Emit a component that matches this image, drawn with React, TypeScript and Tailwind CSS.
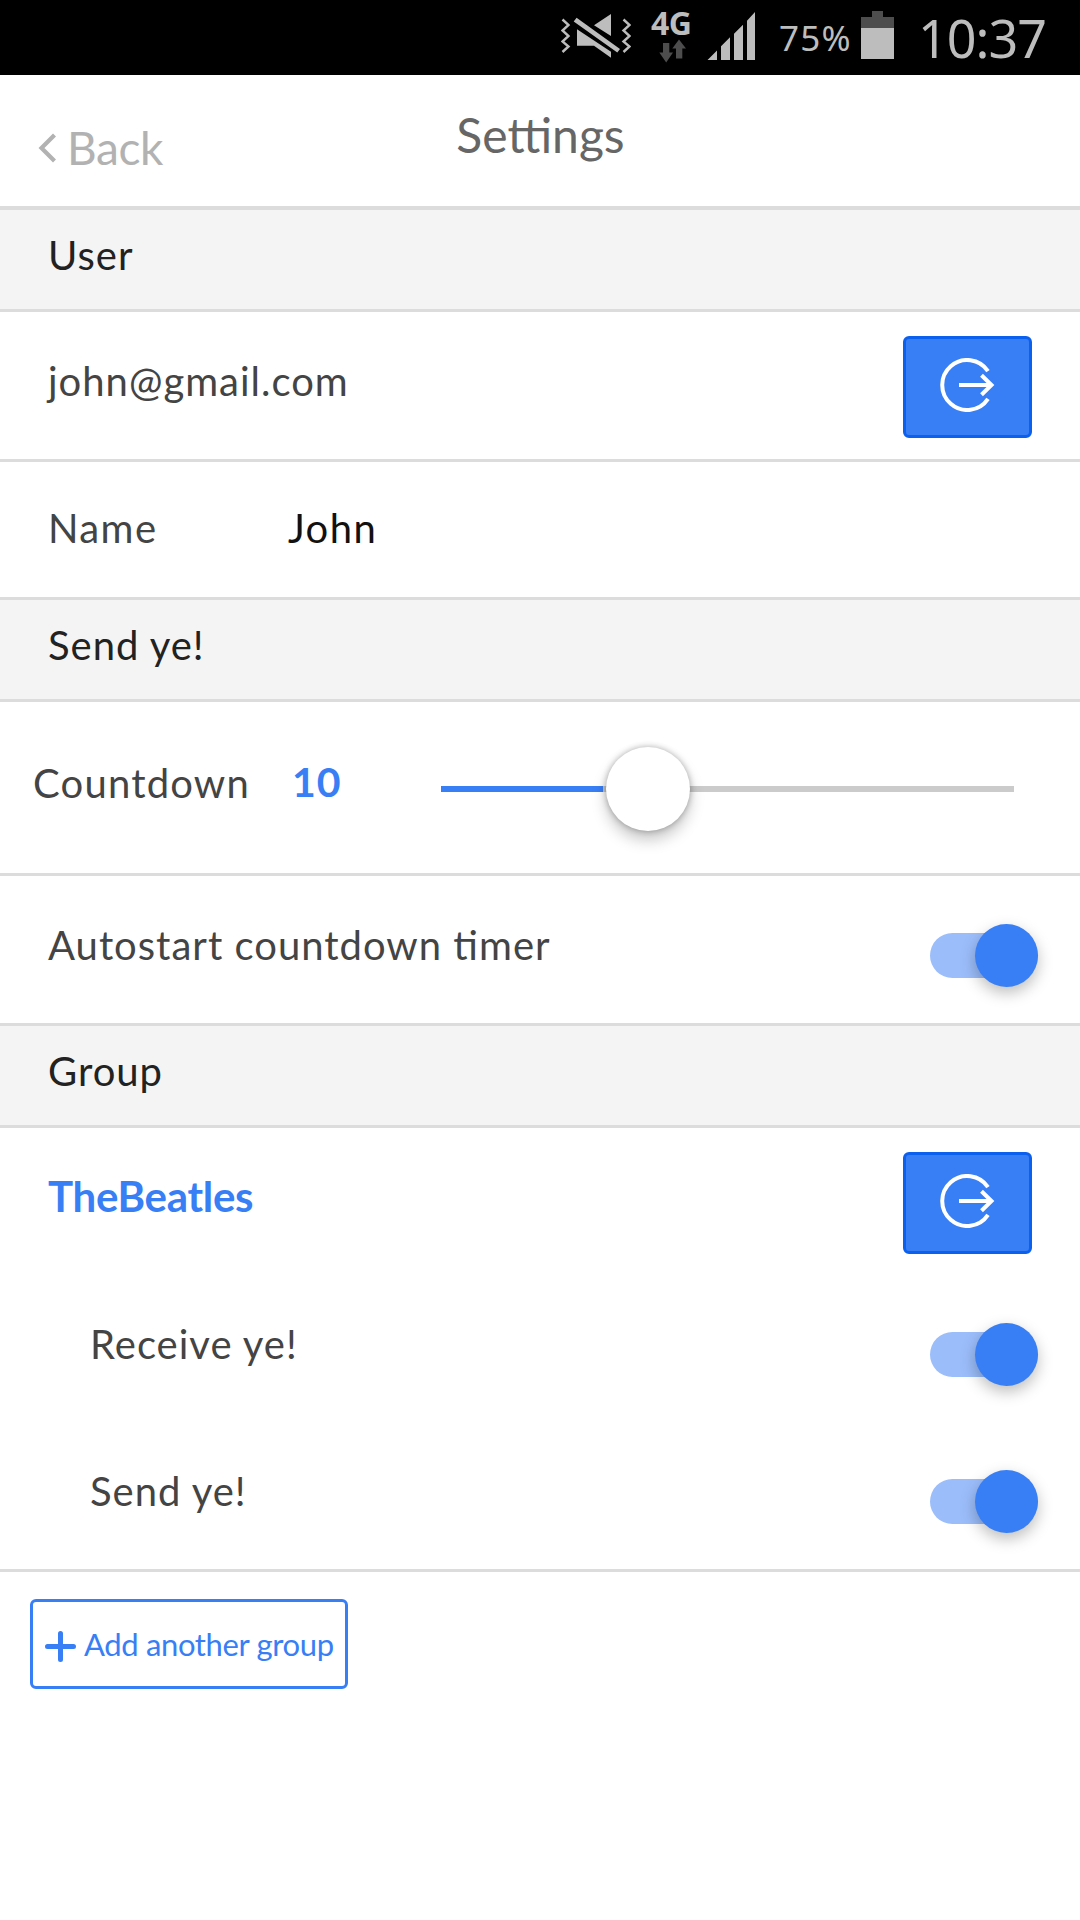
import React, { useState } from 'react';

const StatusBar: React.FC = () => (
  <div className="flex h-[75px] bg-black pl-[561px] text-[#bdbdbd]">
    {/* muted + vibrate */}
    <svg className="mt-[13px] h-[46px] w-[70px] shrink-0" viewBox="561 13 70 46" fill="currentColor">
      <path d="M562.5 19.5l6 5.5-6 5.5 6 5.5-6 5.5 6 5-6 5.5M623.5 19.5l6 5.5-6 5.5 6 5.5-6 5.5 6 5-6 5.5" fill="none" stroke="currentColor" strokeWidth="2.4" />
      <path d="M611 14v22l-17-10.7zM577 29.3l34 22.5v6l-17-12h-17zM576.6 17.7l43.4 31.2-2.7 3.6-43.6-30.9z" />
    </svg>
    <div className="ml-[20px] flex w-[42px] flex-col">
      <span className="font-['Noto_Sans'] text-[32px] leading-[46px] font-bold tracking-[-0.5px]">4G</span>
      <svg className="mt-[-7px] ml-[8px] h-[24px] w-[28px]" viewBox="0 0 28 24" fill="#4d4d4d">
        <path d="M4 4h6.300v9.500h3.700L7.200 23.500.3 13.500H4zM17 19.500V9.500h-3.700L20 .500l7 9h-3.700v10z" />
      </svg>
    </div>
    <svg className="mt-[12px] ml-[14px] h-[48px] w-[48px] shrink-0" viewBox="0 0 48 48" fill="currentColor">
      <path d="M.5 48L10 38.400V48zM14 34.300l9-9V48h-9zM27 21.700l9-9V48h-9zM40 8.700l8-8.700V48h-8z" />
    </svg>
    <span className="mt-[20px] ml-[24px] w-[72px] shrink-0 font-['Noto_Sans'] text-[35px] leading-[36px] tracking-[1.2px]">75%</span>
    <svg className="mt-[11px] ml-[10px] h-[48px] w-[33px] shrink-0" viewBox="0 0 33 48" fill="currentColor">
      <path d="M0 6h11V0h11v6h11v11H0z" fill="#4d4d4d" />
      <path d="M0 17h33v31H0z" />
    </svg>
    <span className="mt-[12px] ml-[24px] font-['Noto_Sans'] text-[52px] leading-[52px] tracking-[-1px]">10:37</span>
  </div>
);

const SectionHeader: React.FC<{ title: string }> = ({ title }) => (
  <div className="h-[102px] border-b-[3px] border-[#dcdcdc] bg-[#f4f4f4] pt-[21px] pl-[48px] text-[#222]">{title}</div>
);

const LeaveButton: React.FC<{ label: string }> = ({ label }) => (
  <button
    aria-label={label}
    className="flex h-[102px] w-[129px] items-center justify-center rounded-[6px] border-[3px] border-[#0c60ee] bg-[#387ef5]"
  >
    <svg className="ml-[1px] mb-[4px] h-[54px] w-[56px]" viewBox="0 0 56 54" fill="none" stroke="#fff" strokeWidth="4">
      <path d="M48 13.100A25 25 0 1 0 48 40.900" />
      <path d="M19 27h33M41.500 17.200l10 9.800-10 9.800" />
    </svg>
  </button>
);

const Toggle: React.FC<{ label: string }> = ({ label }) => {
  const [on, setOn] = useState(true);

  return (
    <button
      role="switch"
      aria-checked={on}
      aria-label={label}
      onClick={() => setOn(!on)}
      className={`flex h-[45px] w-[108px] items-center rounded-full ${on ? 'justify-end bg-[#9bbdfa]' : 'justify-start bg-[#ccc]'}`}
    >
      <span
        className={`h-[63px] w-[63px] shrink-0 rounded-full shadow-[0_6px_15px_rgba(0,0,0,0.26)] ${on ? 'bg-[#387ef5]' : 'bg-white'}`}
      />
    </button>
  );
};

const App: React.FC = () => {
  const countdown = 10;
  const knobLeft = 165;

  return (
    <div className="h-[1920px] w-[1080px] overflow-hidden bg-white font-['Lato',sans-serif] text-[40px] leading-[48px] tracking-[1px] text-[#444] [font-feature-settings:'liga'_1]">
      <StatusBar />

      <header className="grid h-[135px] grid-cols-3 border-b-4 border-[#dcdcdc] text-[48px] leading-[58px] tracking-normal">
        <button className="mt-[44px] flex h-[58px] items-center pl-[38px] text-[#b2b2b2]">
          <svg className="h-[30px] w-[19px]" viewBox="0 0 19 30" fill="none" stroke="currentColor" strokeWidth="4.200">
            <path d="M16.500 2L3.500 15l13 13" />
          </svg>
          <span className="ml-[10px] text-[46px] tracking-[-0.4px]">Back</span>
        </button>
        <h1 className="mt-[31px] pl-[1px] text-center text-[#666]">Settings</h1>
      </header>

      <SectionHeader title="User" />
      <div className="flex h-[150px] justify-between border-b-[3px] border-[#dcdcdc] pr-[48px] pl-[48px]">
        <span className="mt-[45px]">john@gmail.com</span>
        <div className="mt-[24px]">
          <LeaveButton label="Log out" />
        </div>
      </div>
      <div className="flex h-[138px] border-b-[3px] border-[#dcdcdc] pt-[42px] pl-[48px] tracking-[1.4px]">
        <span className="w-[240px]">Name</span>
        <span className="text-[#111]">John</span>
      </div>

      <SectionHeader title="Send ye!" />
      <div className="flex h-[174px] border-b-[3px] border-[#dcdcdc] pl-[33px]">
        <span className="mt-[57px] w-[259px] tracking-[1.2px]">Countdown</span>
        <span className="mt-[56px] w-[149px] text-[41px] font-bold text-[#387ef5]">{countdown}</span>
        <div className="relative mt-[84px] h-[6px] w-[573px] bg-[#cbcbcb]">
          <div className="h-[6px] bg-[#387ef5]" style={{ width: knobLeft - 3 }} />
          <div
            className="absolute top-[-39px] h-[84px] w-[84px] rounded-full bg-white shadow-[0_0_6px_rgba(0,0,0,0.3),0_9px_15px_rgba(0,0,0,0.22)]"
            style={{ left: knobLeft }}
          />
        </div>
      </div>
      <div className="flex h-[150px] justify-between border-b-[3px] border-[#dcdcdc] pr-[42px] pl-[48px]">
        <span className="mt-[45px]">Autostart countdown timer</span>
        <div className="mt-[57px]">
          <Toggle label="Autostart countdown timer" />
        </div>
      </div>

      <SectionHeader title="Group" />
      <div className="h-[444px] border-b-[3px] border-[#dcdcdc]">
        <div className="flex h-[147px] justify-between pr-[48px] pl-[48px]">
          <span className="mt-[44px] text-[42px] font-bold tracking-[-0.3px] text-[#387ef5]">TheBeatles</span>
          <div className="mt-[24px]">
            <LeaveButton label="Leave group" />
          </div>
        </div>
        <div className="flex h-[147px] justify-between pr-[42px] pl-[90px]">
          <span className="mt-[45px]">Receive ye!</span>
          <div className="mt-[57px]">
            <Toggle label="Receive ye!" />
          </div>
        </div>
        <div className="flex h-[147px] justify-between pr-[42px] pl-[90px]">
          <span className="mt-[45px]">Send ye!</span>
          <div className="mt-[57px]">
            <Toggle label="Send ye!" />
          </div>
        </div>
      </div>

      <button className="mt-[27px] ml-[30px] flex h-[90px] w-[318px] items-center rounded-[6px] border-[3px] border-[#387ef5] pl-[12px] text-[#387ef5]">
        <svg className="mt-[5px] h-[31px] w-[31px] shrink-0" viewBox="0 0 31 31" stroke="currentColor" strokeWidth="5" strokeLinecap="round">
          <path d="M15.500 2.500v26M2.500 15.500h26" />
        </svg>
        <span className="ml-[8px] text-[31px] leading-[40px] tracking-[-0.35px] whitespace-nowrap">Add another group</span>
      </button>
    </div>
  );
};

export default App;
